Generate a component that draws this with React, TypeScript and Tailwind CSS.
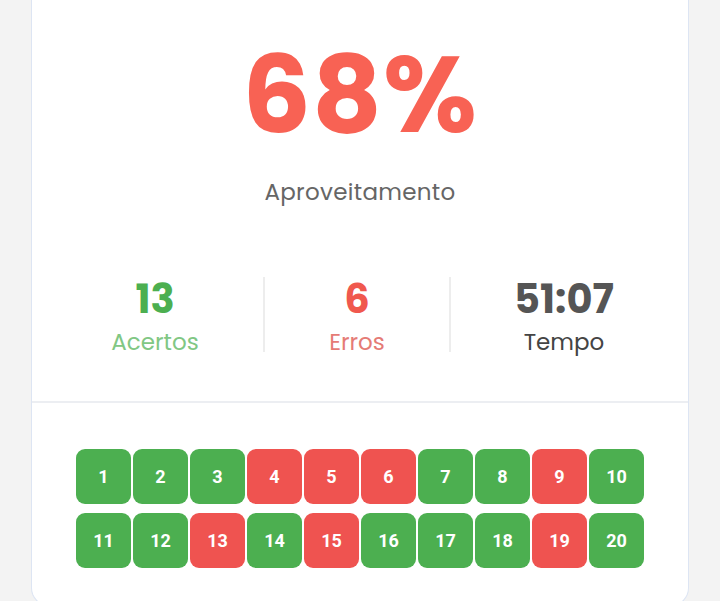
import React from "react";

const wrong = new Set([4, 5, 6, 9, 13, 15, 19]);

function Stat({ value, label, vClass, lClass, border }: { value: string; label: string; vClass: string; lClass: string; border?: boolean }) {
  return (
    <div className={`flex flex-col items-center h-[75px] ${border ? "border-l-2 border-[#ededed]" : ""}`}>
      <div className={`text-[40px] leading-[44px] font-bold ${vClass}`}>{value}</div>
      <div className={`text-[23px] leading-[30px] mt-[6px] ${lClass}`}>{label}</div>
    </div>
  );
}

export default function App() {
  const nums = Array.from({ length: 20 }, (_, i) => i + 1);
  return (
    <div className="w-full h-[601px] overflow-hidden bg-[#f3f3f3] px-[31px]" style={{ fontFamily: "Poppins, 'Open Sans', 'Noto Sans', sans-serif" }}>
      <div className="h-[606px] bg-white border border-t-0 border-[#dde5f3] rounded-b-[18px] flex flex-col">
        <div className="h-[403px] border-b-2 border-[#eceef2] flex flex-col items-center">
          <div className="mt-[35px] text-[108px] leading-[120px] font-bold text-[#f86254] tracking-[1px]">68%</div>
          <div className="mt-[22px] text-[23px] leading-[30px] text-[#666666] tracking-[0.3px]">Aproveitamento</div>
          <div className="mt-[70px] w-full grid grid-cols-[216px_186px_228px] pl-[15px]">
            <Stat value="13" label="Acertos" vClass="text-[#4caf50]" lClass="text-[#81c784]" />
            <Stat value="6" label="Erros" vClass="text-[#f0584e]" lClass="text-[#e57b76]" border />
            <Stat value="51:07" label="Tempo" vClass="text-[#555555]" lClass="text-[#444444]" border />
          </div>
        </div>
        <div className="flex justify-center pt-[46px]">
          <div className="grid grid-cols-[repeat(10,55px)] gap-x-[2px] gap-y-[9px]">
            {nums.map((n) => (
              <div
                key={n}
                className={`h-[55px] rounded-[9px] flex items-center justify-center text-white text-[18px] font-bold ${wrong.has(n) ? "bg-[#ef5350]" : "bg-[#4caf50]"}`}
                style={{ fontFamily: "Roboto, 'Liberation Sans', sans-serif" }}
              >
                {n}
              </div>
            ))}
          </div>
        </div>
      </div>
    </div>
  );
}
